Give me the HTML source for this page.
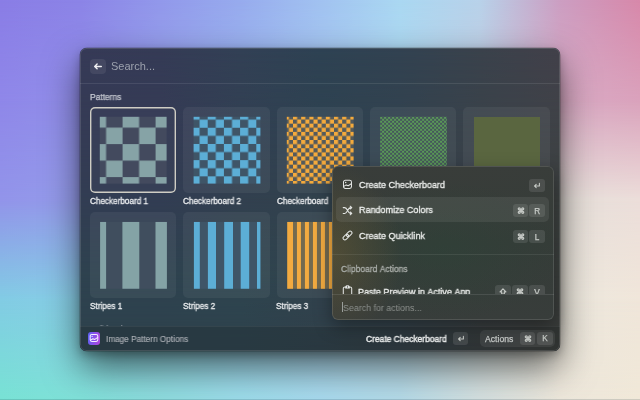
<!DOCTYPE html>
<html><head><meta charset="utf-8">
<style>
*{margin:0;padding:0;box-sizing:border-box}
html,body{width:640px;height:400px;overflow:hidden}
body{position:relative;font-family:"Liberation Sans",sans-serif;background:#a6d6f0;font-kerning:none}
.abs{position:absolute}
.t{position:absolute;white-space:nowrap;line-height:1;will-change:transform;transform-origin:0 0}
#shadow{position:absolute;left:80px;top:48px;width:480px;height:303px;border-radius:7px;box-shadow:0 0 0 0.5px rgba(0,0,0,.3),0 4px 8px rgba(0,0,0,.25),0 16px 36px rgba(0,0,0,.58)}
#win{position:absolute;left:80px;top:48px;width:480px;height:303px;border-radius:6.5px;overflow:hidden;background:#323e50}
.sep{position:absolute;height:1px;background:rgba(255,255,255,.09)}
.tile{position:absolute;width:86.4px;height:86px;border-radius:5px;background:rgba(255,255,255,.055)}
.key{position:absolute;width:16px;height:13.5px;border-radius:3px;background:rgba(255,255,255,.10);color:#c8ccc8;font-size:8px;text-align:center;line-height:13.5px}
</style></head><body>
<div class="abs" style="left:0px;top:0px;width:640px;height:400px;overflow:hidden;border-radius:0px"><div style="position:absolute;left:0;top:0;width:640px;height:400px;background:linear-gradient(90deg,#8a7de6 0px,#8c84e7 80px,#9298eb 160px,#97abee 240px,#a1c2f1 320px,#aad8f2 400px,#b8d2ea 480px,#cc9ec2 560px,#d888aa 640px);"></div><div style="position:absolute;left:0;top:0;width:640px;height:400px;background:linear-gradient(90deg,#8f87e9 0px,#918ee9 80px,#97a3ec 160px,#9cb7ef 240px,#a7c8f0 320px,#b0d8f0 400px,#c4cce0 480px,#d8aac4 560px,#daa2bc 640px);-webkit-mask-image:linear-gradient(180deg,transparent 0px,#000 100px);mask-image:linear-gradient(180deg,transparent 0px,#000 100px);"></div><div style="position:absolute;left:0;top:0;width:640px;height:400px;background:linear-gradient(90deg,#9294ea 0px,#949cea 80px,#9cb6ee 160px,#a3caf0 240px,#b0d4ef 320px,#bddbed 400px,#d6dade 480px,#e6e0da 560px,#ecdeda 640px);-webkit-mask-image:linear-gradient(180deg,transparent 100px,#000 200px);mask-image:linear-gradient(180deg,transparent 100px,#000 200px);"></div><div style="position:absolute;left:0;top:0;width:640px;height:400px;background:linear-gradient(90deg,#82cce4 0px,#88cee6 80px,#94d2e8 160px,#a0d6ec 240px,#b0daec 320px,#c0dee8 400px,#d8e2e0 480px,#ece8de 560px,#f0e6da 640px);-webkit-mask-image:linear-gradient(180deg,transparent 200px,#000 300px);mask-image:linear-gradient(180deg,transparent 200px,#000 300px);"></div><div style="position:absolute;left:0;top:0;width:640px;height:400px;background:linear-gradient(90deg,#78e2d4 0px,#80e0d8 80px,#8edcde 160px,#9cdcea 240px,#a8daee 320px,#b4dae8 400px,#d4e0e0 480px,#ece6da 560px,#f0e8d8 640px);-webkit-mask-image:linear-gradient(180deg,transparent 300px,#000 400px);mask-image:linear-gradient(180deg,transparent 300px,#000 400px);"></div></div>
<div id="shadow"></div>
<div id="win">
<div class="abs" style="left:0px;top:0px;width:480px;height:304px;overflow:hidden;border-radius:0px"><div style="position:absolute;left:0;top:0;width:480px;height:304px;background:linear-gradient(90deg,#363a57 0px,#353b56 80px,#324055 160px,#2e4253 240px,#324251 320px,#3a424c 400px,#42404a 480px);"></div><div style="position:absolute;left:0;top:0;width:480px;height:304px;background:linear-gradient(90deg,#353b55 0px,#353b55 80px,#324053 160px,#2e4251 240px,#32424f 320px,#3a424a 400px,#3f4247 480px);-webkit-mask-image:linear-gradient(180deg,transparent 0px,#000 76px);mask-image:linear-gradient(180deg,transparent 0px,#000 76px);"></div><div style="position:absolute;left:0;top:0;width:480px;height:304px;background:linear-gradient(90deg,#323d53 0px,#323d53 80px,#32404f 160px,#32424d 240px,#32424d 320px,#3b4047 400px,#3c403f 480px);-webkit-mask-image:linear-gradient(180deg,transparent 76px,#000 152px);mask-image:linear-gradient(180deg,transparent 76px,#000 152px);"></div><div style="position:absolute;left:0;top:0;width:480px;height:304px;background:linear-gradient(90deg,#2e424f 0px,#2e424f 80px,#2e454f 160px,#32424d 240px,#32424b 320px,#384044 400px,#3a3e3c 480px);-webkit-mask-image:linear-gradient(180deg,transparent 152px,#000 228px);mask-image:linear-gradient(180deg,transparent 152px,#000 228px);"></div><div style="position:absolute;left:0;top:0;width:480px;height:304px;background:linear-gradient(90deg,#2e424d 0px,#2e424d 80px,#2e424d 160px,#2f404a 240px,#313d44 320px,#363a3c 400px,#383a38 480px);-webkit-mask-image:linear-gradient(180deg,transparent 228px,#000 304px);mask-image:linear-gradient(180deg,transparent 228px,#000 304px);"></div></div>

  <div class="sep" style="left:0;top:35px;width:480px"></div>
  <div class="abs" style="left:0;top:278px;width:480px;height:26px;background:rgba(20,24,24,.20);border-top:1px solid rgba(255,255,255,.06)"></div>
  <div class="abs" style="left:0;top:0;width:480px;height:303px;border-radius:6.5px;box-shadow:inset 0 0 0 1px rgba(255,255,255,.12)"></div>
</div>
<div class="abs" style="left:90px;top:58.5px;width:16px;height:15.5px;border-radius:4px;background:rgba(255,255,255,.075)">
  <svg width="16" height="16" viewBox="0 0 16 16" style="position:absolute;left:0;top:0"><path d="M11.3 7.4H4.8M7.1 5.1L4.7 7.4L7.1 9.7" stroke="#f0f0f2" stroke-width="1.45" fill="none" stroke-linecap="round" stroke-linejoin="round"/></svg>
</div>
<div class="tile" style="left:90.00px;top:107.0px;background:rgba(255,255,255,.02);box-shadow:inset 0 0 0 1.4px #cfcdc4;"></div>
<div class="tile" style="left:183.35px;top:107.0px;"></div>
<div class="tile" style="left:276.70px;top:107.0px;"></div>
<div class="tile" style="left:370.05px;top:107.0px;"></div>
<div class="tile" style="left:463.40px;top:107.0px;"></div>
<div class="tile" style="left:90.00px;top:212.0px;"></div>
<div class="tile" style="left:183.35px;top:212.0px;"></div>
<div class="tile" style="left:276.70px;top:212.0px;"></div>
<div class="tile" style="left:370.05px;top:212.0px;"></div>
<div class="tile" style="left:463.40px;top:212.0px;"></div>
<svg class="abs" style="left:99px;top:116px" width="68" height="68" viewBox="0 0 68 68"><g transform="translate(0.80 0.80)"><defs><pattern id="p1" x="-10.2" y="-5.699999999999999" width="33.0" height="33.0" patternUnits="userSpaceOnUse"><rect width="33.0" height="33.0" fill="#434a5e"/><rect width="16.5" height="16.5" fill="#86a3a6"/><rect x="16.5" y="16.5" width="16.5" height="16.5" fill="#86a3a6"/></pattern></defs><rect width="66.8" height="66.8" fill="url(#p1)"/></g></svg>
<svg class="abs" style="left:193px;top:116px" width="68" height="68" viewBox="0 0 68 68"><g transform="translate(0.60 0.80)"><defs><pattern id="p2" x="-2.0999999999999996" y="-5.25" width="16.2" height="16.2" patternUnits="userSpaceOnUse"><rect width="16.2" height="16.2" fill="#3f5567"/><rect width="8.1" height="8.1" fill="#5caed6"/><rect x="8.1" y="8.1" width="8.1" height="8.1" fill="#5caed6"/></pattern></defs><rect width="66.8" height="66.8" fill="url(#p2)"/></g></svg>
<svg class="abs" style="left:286px;top:116px" width="68" height="68" viewBox="0 0 68 68"><g transform="translate(0.80 0.80)"><defs><pattern id="p3" x="-1.9999999999999996" y="-1.3499999999999996" width="8.2" height="8.2" patternUnits="userSpaceOnUse"><rect width="8.2" height="8.2" fill="#535a5c"/><rect width="4.1" height="4.1" fill="#f4aa3c"/><rect x="4.1" y="4.1" width="4.1" height="4.1" fill="#f4aa3c"/></pattern></defs><rect width="66.8" height="66.8" fill="url(#p3)"/></g></svg>
<svg class="abs" style="left:380px;top:116px" width="68" height="68" viewBox="0 0 68 68"><g transform="translate(0.10 0.80)"><defs><pattern id="p4" x="0" y="0" width="4" height="4" patternUnits="userSpaceOnUse"><rect width="4" height="4" fill="#44575a"/><rect width="2" height="2" fill="#5a9858"/><rect x="2" y="2" width="2" height="2" fill="#5a9858"/></pattern></defs><rect width="66.8" height="66.8" fill="url(#p4)"/></g></svg>
<div class="abs" style="left:473.50px;top:116.80px;width:66.8px;height:66.8px;background:#5a6640"></div>
<svg class="abs" style="left:100px;top:221px" width="68" height="68" viewBox="0 0 68 68"><g transform="translate(0.10 0.95)"><rect width="66.8" height="66.8" fill="#404e5e"/><rect x="0" width="6.00" height="66.8" fill="#84a3a6"/><rect x="22.3" width="16.90" height="66.8" fill="#84a3a6"/><rect x="55.4" width="11.40" height="66.8" fill="#84a3a6"/></g></svg>
<svg class="abs" style="left:193px;top:221px" width="68" height="68" viewBox="0 0 68 68"><g transform="translate(0.90 0.95)"><rect width="66.8" height="66.8" fill="#3f5567"/><rect x="0" width="5.90" height="66.8" fill="#5caed6"/><rect x="14" width="8.10" height="66.8" fill="#5caed6"/><rect x="30.3" width="8.80" height="66.8" fill="#5caed6"/><rect x="46.8" width="8.50" height="66.8" fill="#5caed6"/><rect x="63.1" width="3.40" height="66.8" fill="#5caed6"/></g></svg>
<svg class="abs" style="left:287px;top:221px" width="68" height="68" viewBox="0 0 68 68"><g transform="translate(0.25 0.95)"><rect width="66.8" height="66.8" fill="#736a50"/><rect x="0" width="5.75" height="66.8" fill="#f2aa40"/><rect x="9.7" width="4.00" height="66.8" fill="#f2aa40"/><rect x="17.7" width="4.00" height="66.8" fill="#f2aa40"/><rect x="25.7" width="4.00" height="66.8" fill="#f2aa40"/><rect x="33.7" width="4.00" height="66.8" fill="#f2aa40"/><rect x="41.7" width="4.00" height="66.8" fill="#f2aa40"/><rect x="49.7" width="4.00" height="66.8" fill="#f2aa40"/><rect x="57.7" width="4.00" height="66.8" fill="#f2aa40"/><rect x="65.7" width="4.00" height="66.8" fill="#f2aa40"/></g></svg>
<div class="abs" style="left:380.40px;top:221.95px;width:66.8px;height:66.8px;background:#68a85c"></div>
<div class="t" style="left:110.50px;top:61.00px;font-size:11px;color:#9ca1ad;transform:scaleX(0.9937);">Search...</div>
<div class="t" style="left:89.81px;top:93.00px;font-size:8.6px;color:#c6c9d2;transform:scaleX(0.9771);-webkit-text-stroke:0.25px #c6c9d2;">Patterns</div>
<div class="t" style="left:90.29px;top:197.00px;font-size:8.4px;color:#eceef0;transform:scaleX(0.9723);-webkit-text-stroke:0.3px #eceef0;">Checkerboard 1</div>
<div class="t" style="left:183.49px;top:197.00px;font-size:8.4px;color:#eceef0;transform:scaleX(0.9723);-webkit-text-stroke:0.3px #eceef0;">Checkerboard 2</div>
<div class="t" style="left:276.69px;top:197.00px;font-size:8.4px;color:#eceef0;transform:scaleX(0.9723);-webkit-text-stroke:0.3px #eceef0;">Checkerboard</div>
<div class="t" style="left:90.03px;top:302.00px;font-size:8.4px;color:#eceef0;transform:scaleX(0.9723);-webkit-text-stroke:0.3px #eceef0;">Stripes 1</div>
<div class="t" style="left:183.23px;top:302.00px;font-size:8.4px;color:#eceef0;transform:scaleX(0.9723);-webkit-text-stroke:0.3px #eceef0;">Stripes 2</div>
<div class="t" style="left:276.43px;top:302.00px;font-size:8.4px;color:#eceef0;transform:scaleX(0.9723);-webkit-text-stroke:0.3px #eceef0;">Stripes 3</div>
<div class="abs" style="left:85px;top:318px;width:200px;height:8px;overflow:hidden"><div class="abs" style="left:-85px;top:-318px;width:0;height:0"><div class="t" style="left:90.23px;top:325.00px;font-size:8.4px;color:#9aa0a6;transform:scaleX(0.9723);-webkit-text-stroke:0.1px #9aa0a6;">Solid Colors</div>
</div></div>

<div class="abs" style="left:88px;top:332.2px;width:12.2px;height:12.7px;border-radius:3px;background:linear-gradient(100deg,#5a62f2 0%,#8a50ea 50%,#b044de 100%)">
  <svg width="12.5" height="12.5" viewBox="0 0 12.5 12.5" style="position:absolute;left:0;top:0"><rect x="2.2" y="2.4" width="7.6" height="7" rx="1.6" stroke="#f4f0ff" stroke-width="1.05" fill="none"/><circle cx="4.1" cy="4.4" r="0.6" fill="#f4f0ff"/><path d="M2.6 8.1L4.9 6.7L6.8 7.4L9.5 5.6" stroke="#f4f0ff" stroke-width="1.1" fill="none" stroke-linecap="round" stroke-linejoin="round"/></svg>
</div>
<div class="t" style="left:106.14px;top:335.00px;font-size:8.6px;color:#aaaeb4;transform:scaleX(0.9559);-webkit-text-stroke:0.15px #aaaeb4;">Image Pattern Options</div>
<div class="t" style="left:366.17px;top:335.00px;font-size:8.6px;color:#eef0f0;transform:scaleX(0.9812);-webkit-text-stroke:0.4px #eef0f0;">Create Checkerboard</div>
<div class="t" style="left:485.23px;top:335.00px;font-size:8.5px;color:#c0c4c2;transform:scaleX(1.0163);-webkit-text-stroke:0.25px #c0c4c2;">Actions</div>

<div class="key" style="left:453.2px;top:332.1px;width:15.2px;height:12.8px"><svg width="16" height="13" viewBox="0 0 16 13" style="position:absolute;left:0;top:0"><path d="M10.4 4.4v2.6H5.6M7.2 5.4L5.6 7L7.2 8.6" stroke="#c4c8c4" stroke-width="1.1" fill="none" stroke-linecap="round" stroke-linejoin="round"/></svg></div>
<div class="abs" style="left:480px;top:329.75px;width:74.5px;height:17.5px;border-radius:5px;background:rgba(255,255,255,.07)"></div>
<div class="key" style="left:519.9px;top:332.25px;width:15.6px;height:12.85px"><svg width="16" height="13" viewBox="0 0 16 13" style="position:absolute;left:0;top:0"><path d="M7.20 4.85V8.35M8.80 4.85V8.35M6.25 5.80H9.75M6.25 7.40H9.75M7.20 4.85A0.95 0.95 0 1 0 6.25 5.80M8.80 4.85A0.95 0.95 0 1 1 9.75 5.80M7.20 8.35A0.95 0.95 0 1 1 6.25 7.40M8.80 8.35A0.95 0.95 0 1 0 9.75 7.40" stroke="#c4c8c4" stroke-width="1.3" fill="none" stroke-linecap="round" stroke-linejoin="round"/></svg></div><div class="key" style="left:537px;top:332.25px;width:15.8px;height:12.85px;font-size:8.2px;line-height:12.85px;padding-top:0.8px;-webkit-text-stroke:0.25px #c8ccc8">K</div>

<div id="ap" class="abs" style="left:332px;top:166px;width:222px;height:154px;border-radius:6px;overflow:hidden;
 background:radial-gradient(ellipse 70px 90px at 0px 88px,rgba(120,100,50,.40),rgba(120,100,50,0)),radial-gradient(ellipse 120px 70px at 110px 85px,rgba(40,70,55,.35),rgba(40,70,55,0)),linear-gradient(180deg,#393d3a 0%,#353c38 50%,#383d3b 100%);
 box-shadow:inset 0 0 0 1px rgba(255,255,255,.12),0 6px 18px rgba(0,0,0,.35)">
 <div class="abs" style="left:-332px;top:-166px;width:0;height:0"><svg class="abs" style="left:342px;top:179px" width="11" height="11" viewBox="0 0 11 11"><rect x="1.5" y="1.3" width="8" height="8.2" rx="1.9" stroke="#e2e4e2" stroke-width="1.05" fill="none" stroke-linecap="round" stroke-linejoin="round"/><circle cx="3.7" cy="3.6" r="0.75" fill="#e6e8e6"/><path d="M1.8 7.4L4.2 5.9L6.2 6.7L9.3 4.8" stroke="#e2e4e2" stroke-width="1.05" fill="none" stroke-linecap="round" stroke-linejoin="round"/></svg><div class="key" style="left:529.4px;top:178.5px;width:15.4px;height:13.2px"><svg width="16" height="13" viewBox="0 0 16 13" style="position:absolute;left:0;top:0"><path d="M10.4 4.4v2.6H5.6M7.2 5.4L5.6 7L7.2 8.6" stroke="#c4c8c4" stroke-width="1.1" fill="none" stroke-linecap="round" stroke-linejoin="round"/></svg></div><div class="abs" style="left:336px;top:197.1px;width:213.2px;height:24.8px;border-radius:5px;background:rgba(255,255,255,.075)"></div><svg class="abs" style="left:342px;top:204.5px" width="11" height="11" viewBox="0 0 11 11"><path d="M1.2 2.6h1.6c2.6 0 3 5.8 5.6 5.8h1.2M1.2 8.4h1.6c2.6 0 3-5.8 5.6-5.8h1.2M8.2 1.2l1.6 1.4-1.6 1.4M8.2 7l1.6 1.4-1.6 1.4" stroke="#e2e4e2" stroke-width="1.05" fill="none" stroke-linecap="round" stroke-linejoin="round"/></svg><div class="key" style="left:512.5px;top:203.8px;width:15.4px;height:13.2px"><svg width="16" height="13" viewBox="0 0 16 13" style="position:absolute;left:0;top:0"><path d="M7.20 4.85V8.35M8.80 4.85V8.35M6.25 5.80H9.75M6.25 7.40H9.75M7.20 4.85A0.95 0.95 0 1 0 6.25 5.80M8.80 4.85A0.95 0.95 0 1 1 9.75 5.80M7.20 8.35A0.95 0.95 0 1 1 6.25 7.40M8.80 8.35A0.95 0.95 0 1 0 9.75 7.40" stroke="#c4c8c4" stroke-width="1.3" fill="none" stroke-linecap="round" stroke-linejoin="round"/></svg></div><div class="key" style="left:529.4px;top:203.8px;width:15.4px;height:13.2px;font-size:8.2px;line-height:13.2px;padding-top:0.8px;-webkit-text-stroke:0.25px #c8ccc8">R</div><svg class="abs" style="left:342px;top:230px" width="11" height="11" viewBox="0 0 11 11"><rect x="0.67" y="5.33" width="6.4" height="3.6" rx="1.8" transform="rotate(-45 3.87 7.13)" stroke="#e2e4e2" stroke-width="1.05" fill="none" stroke-linecap="round" stroke-linejoin="round"/><rect x="3.93" y="2.07" width="6.4" height="3.6" rx="1.8" transform="rotate(-45 7.13 3.87)" stroke="#e2e4e2" stroke-width="1.05" fill="none" stroke-linecap="round" stroke-linejoin="round"/></svg><div class="key" style="left:512.5px;top:229.8px;width:15.4px;height:13.2px"><svg width="16" height="13" viewBox="0 0 16 13" style="position:absolute;left:0;top:0"><path d="M7.20 4.85V8.35M8.80 4.85V8.35M6.25 5.80H9.75M6.25 7.40H9.75M7.20 4.85A0.95 0.95 0 1 0 6.25 5.80M8.80 4.85A0.95 0.95 0 1 1 9.75 5.80M7.20 8.35A0.95 0.95 0 1 1 6.25 7.40M8.80 8.35A0.95 0.95 0 1 0 9.75 7.40" stroke="#c4c8c4" stroke-width="1.3" fill="none" stroke-linecap="round" stroke-linejoin="round"/></svg></div><div class="key" style="left:529.4px;top:229.8px;width:15.4px;height:13.2px;font-size:8.2px;line-height:13.2px;padding-top:0.8px;-webkit-text-stroke:0.25px #c8ccc8">L</div><div class="t" style="left:359.04px;top:181.00px;font-size:9.3px;color:#eceeec;transform:scaleX(0.9665);-webkit-text-stroke:0.32px #eceeec;">Create Checkerboard</div>
<div class="t" style="left:358.86px;top:206.00px;font-size:9.3px;color:#eceeec;transform:scaleX(0.9665);-webkit-text-stroke:0.32px #eceeec;">Randomize Colors</div>
<div class="t" style="left:358.64px;top:232.00px;font-size:9.3px;color:#eceeec;transform:scaleX(0.9665);-webkit-text-stroke:0.32px #eceeec;">Create Quicklink</div>
<div class="t" style="left:340.77px;top:265.00px;font-size:9px;color:#adb1ad;transform:scaleX(0.9447);-webkit-text-stroke:0.3px #adb1ad;">Clipboard Actions</div>
<div class="sep" style="left:332px;top:253.5px;width:222px;background:rgba(255,255,255,.08)"></div><div class="abs" style="left:332px;top:166px;width:222px;height:128.3px;overflow:hidden"><div class="abs" style="left:-332px;top:-166px;width:0;height:0"><svg class="abs" style="left:342px;top:285px" width="11" height="11" viewBox="0 0 11 11"><path d="M3.3 1.9H2.9a1.6 1.6 0 0 0-1.6 1.6V11M7.7 1.9h0.4a1.6 1.6 0 0 1 1.6 1.6V11" stroke="#e2e4e2" stroke-width="1.05" fill="none" stroke-linecap="round" stroke-linejoin="round" stroke-width="1.3"/><path d="M3.4 3.2V1.9a2.1 1.5 0 0 1 4.2 0V3.2Z" fill="#e6e8e6" stroke="#e6e8e6" stroke-width="0.6" stroke-linejoin="round"/><circle cx="5.5" cy="1.9" r="0.55" fill="#3a3f3a"/></svg><div class="t" style="left:358.36px;top:288.00px;font-size:9.3px;color:#eceeec;transform:scaleX(0.9665);-webkit-text-stroke:0.32px #eceeec;">Paste Preview in Active App</div>
<div class="key" style="left:495.2px;top:285.2px;width:15.4px;height:13.2px"><svg width="16" height="13" viewBox="0 0 16 13" style="position:absolute;left:0;top:0"><path d="M8 3.8L5.1 6.8H6.7V9.2H9.3V6.8H10.9Z" stroke="#c4c8c4" stroke-width="1.2" fill="none" stroke-linecap="round" stroke-linejoin="round"/></svg></div><div class="key" style="left:512.3px;top:285.2px;width:15.4px;height:13.2px"><svg width="16" height="13" viewBox="0 0 16 13" style="position:absolute;left:0;top:0"><path d="M7.20 4.85V8.35M8.80 4.85V8.35M6.25 5.80H9.75M6.25 7.40H9.75M7.20 4.85A0.95 0.95 0 1 0 6.25 5.80M8.80 4.85A0.95 0.95 0 1 1 9.75 5.80M7.20 8.35A0.95 0.95 0 1 1 6.25 7.40M8.80 8.35A0.95 0.95 0 1 0 9.75 7.40" stroke="#c4c8c4" stroke-width="1.3" fill="none" stroke-linecap="round" stroke-linejoin="round"/></svg></div><div class="key" style="left:529.4px;top:285.2px;width:15.4px;height:13.2px;font-size:8.2px;line-height:13.2px;padding-top:0.8px;-webkit-text-stroke:0.25px #c8ccc8">V</div></div></div><div class="sep" style="left:332px;top:294.3px;width:222px;background:rgba(255,255,255,.10)"></div><div class="abs" style="left:342px;top:302.2px;width:1px;height:10.3px;background:#9a9e9a"></div><div class="t" style="left:343.00px;top:304.00px;font-size:9px;color:#8c908d;transform:scaleX(0.9847);">Search for actions...</div>
</div>
</div>
<div class="abs" style="left:0;top:399px;width:640px;height:1px;background:rgba(0,30,40,.14)"></div>
</body></html>
